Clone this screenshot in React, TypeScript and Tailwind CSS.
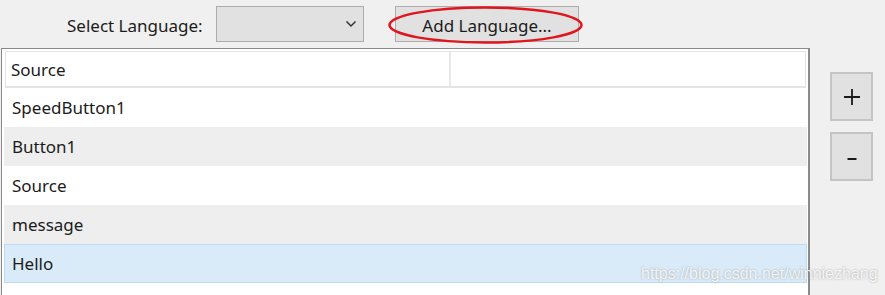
const rows = [
  { label: 'SpeedButton1', tone: 'white' },
  { label: 'Button1', tone: 'gray' },
  { label: 'Source', tone: 'white' },
  { label: 'message', tone: 'gray' },
  { label: 'Hello', tone: 'selected' },
]

const rowClass: Record<string, string> = {
  white: 'bg-white border-transparent',
  gray: 'bg-[#eeeeee] border-transparent',
  selected: 'bg-[#d9ebf9] border-[#bcdcf4]',
}

export default function App() {
  return (
    <div
      className="relative w-[885px] h-[295px] overflow-hidden bg-[#f0f0f0] text-[17px] text-[#1b1b1b]"
      style={{ fontFamily: '"Noto Sans", "Open Sans", sans-serif' }}
    >
      {/* toolbar */}
      <div className="flex items-center h-[48px] pt-[2px]">
        <span className="ml-[67px] w-[149px] leading-none">Select Language:</span>
        <div className="flex items-center justify-end self-start mt-[4px] w-[148px] h-[36px] border border-[#adadad] bg-[#e1e1e1] pr-[6px]">
          <svg width="12" height="8" viewBox="0 0 12 8" fill="none">
            <path d="M1.5 1.5 L6 6 L10.5 1.5" stroke="#333" strokeWidth="1.5" />
          </svg>
        </div>
        <div className="relative self-start mt-[4px] ml-[31px]">
          <button className="w-[184px] h-[36px] border border-[#adadad] bg-[#e1e1e1] leading-none pt-[2px]">
            Add Language...
          </button>
          <svg
            className="absolute left-[-8px] top-[-1px] pointer-events-none"
            width="197"
            height="40"
            viewBox="0 0 197 40"
            fill="none"
          >
            <ellipse cx="98.5" cy="20" rx="96" ry="17.5" stroke="#e0151d" strokeWidth="2.5" />
          </svg>
        </div>
      </div>

      <div className="flex">
        {/* list */}
        <div className="ml-[1px] w-[809px] h-[247px] border-t border-l border-[#8a8a8a] border-r-2 border-r-[#8a8a8a] bg-white pt-[2px] pl-[2px]">
          <div className="flex ml-[1px] w-[801px] h-[37px] border border-[#e3e3e3] border-b-2">
            <div className="flex items-center w-[445px] pl-[5px] pt-[2px] border-r-2 border-[#e8e8e8]">Source</div>
            <div className="flex-1" />
          </div>
          {rows.map(r => (
            <div
              key={r.label}
              className={`flex items-center w-[803px] h-[39px] pl-[7px] pt-[1px] border ${rowClass[r.tone]}`}
            >
              {r.label}
            </div>
          ))}
        </div>

        {/* side buttons */}
        <div className="flex flex-col ml-[20px] pt-[24px] gap-[11px]">
          <button className="flex items-center justify-center w-[43px] h-[49px] border-2 border-[#c4c4c4] bg-[#e1e1e1]">
            <svg width="18" height="18" viewBox="0 0 18 18">
              <path d="M9 1 V17 M1 9 H17" stroke="#1b1b1b" strokeWidth="1.8" />
            </svg>
          </button>
          <button className="flex items-center justify-center w-[43px] h-[49px] border-2 border-[#c4c4c4] bg-[#e1e1e1] pt-[4px]">
            <svg width="12" height="4" viewBox="0 0 12 4">
              <path d="M1.5 2 H10.5" stroke="#1b1b1b" strokeWidth="2" />
            </svg>
          </button>
        </div>
      </div>

      {/* watermark */}
      <div
        className="absolute left-[641px] top-[262px] text-[16px] text-white/85 pointer-events-none"
        style={{ fontFamily: '"Liberation Sans", sans-serif', textShadow: '0 0 2px rgba(120,120,120,0.7)' }}
      >
        https://blog.csdn.net/winniezhang
      </div>
    </div>
  )
}
